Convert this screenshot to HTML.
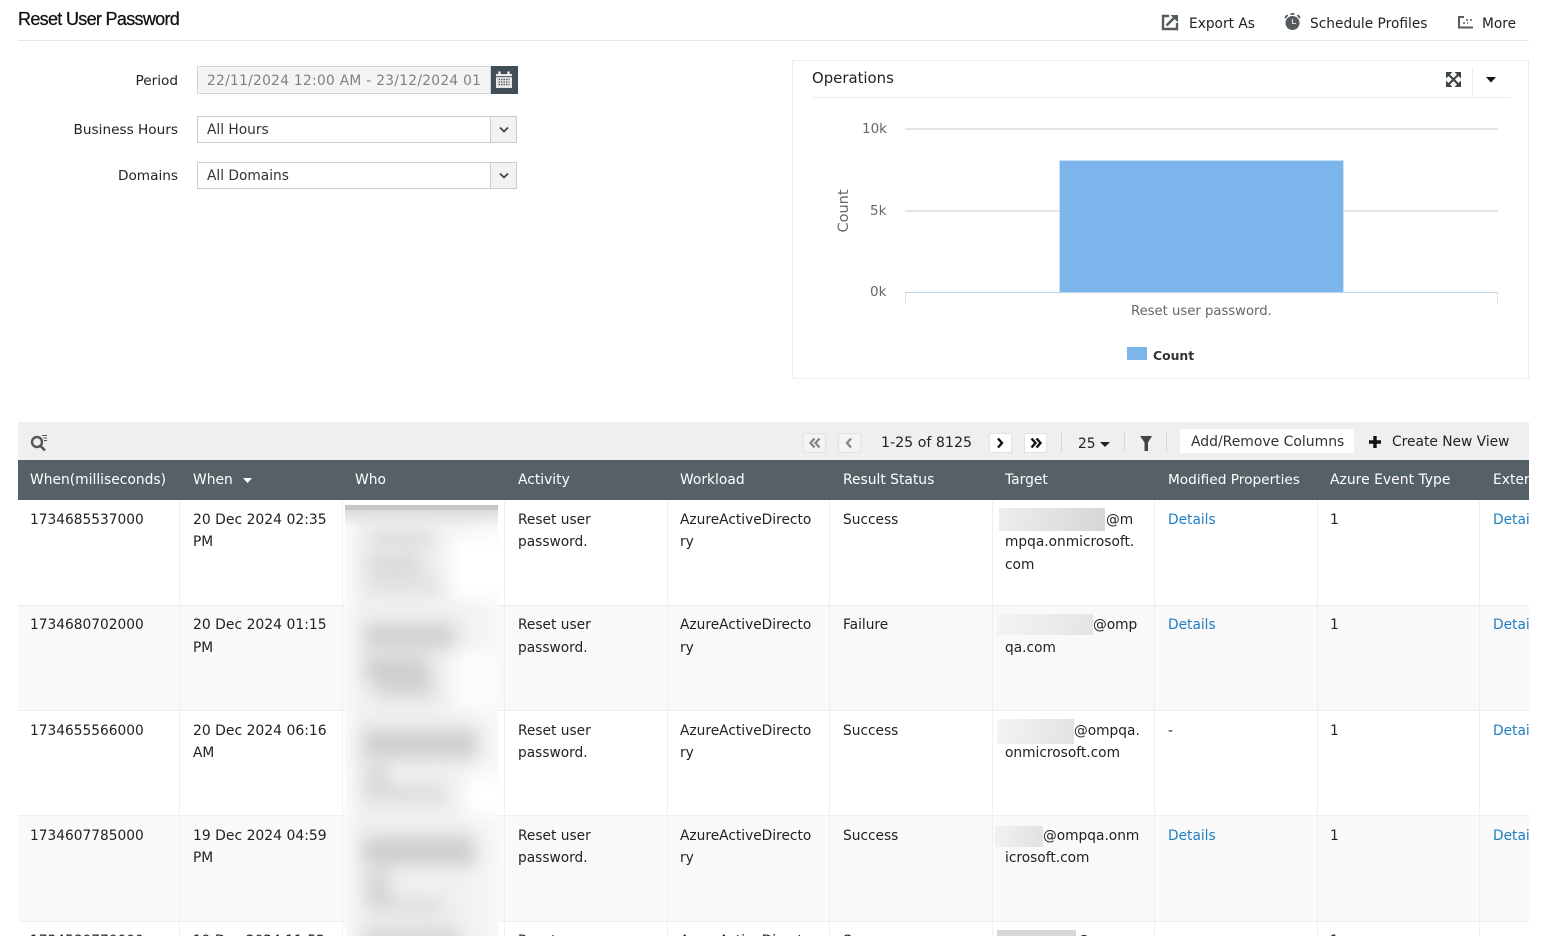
<!DOCTYPE html>
<html lang="en"><head><meta charset="utf-8"><title>Reset User Password</title>
<style>
html,body{margin:0;padding:0;background:#fff;width:1546px;height:936px;overflow:hidden}
body{position:relative;font-family:"DejaVu Sans","Liberation Sans",sans-serif;font-size:13.75px;color:#222}
.a{position:absolute}
.t{position:absolute;white-space:nowrap;line-height:20px;height:20px;margin-top:1px}
.l{text-align:right;width:170px;left:8px;font-size:13.65px}
.h{color:#fff;top:469px;font-size:13.85px}
.v{position:absolute;width:1px;top:500px;height:436px;background:#f0f0f0}
.r{position:absolute;left:18px;width:1511px;background:#f9f9f9}
.hr{position:absolute;left:18px;width:1511px;height:1px;background:#efefef}
.lk{color:#1f7fc1}
.box{position:absolute;background:#fff;border:1px solid #ccc;box-sizing:border-box}
.blob{position:absolute;background:#d0d0d0}
.rd{position:absolute;background:linear-gradient(100deg,#ececec,#dcdcdc)}
svg{position:absolute;overflow:visible}
.pg{position:absolute;top:433px;width:23px;height:20px;box-sizing:border-box;border:1px solid #e2e2e2;background:#fff}
</style></head><body>

<div class="t" style="left:18px;top:9px;margin-top:0;font-family:'Liberation Sans',sans-serif;font-size:18px;color:#111;letter-spacing:-.68px;-webkit-text-stroke:.25px #111">Reset User Password</div>
<div class="a" style="left:18px;top:40px;width:1511px;height:1px;background:#e6e6e6"></div>

<svg style="left:1162px;top:14px" width="16" height="16" viewBox="0 0 16 16"><path d="M7 2H1v13h14V9" fill="none" stroke="#555c60" stroke-width="2.400"/><path d="M4.500 11.500 12 4" fill="none" stroke="#555c60" stroke-width="2.600"/><path d="M8.500 1H16v7.500z" fill="#555c60"/></svg>
<div class="t" style="left:1189px;top:13px">Export As</div>
<svg style="left:1284px;top:13px" width="17" height="18" viewBox="0 0 17 18"><circle cx="8.500" cy="10" r="7" fill="#555c60"/><path d="M8.500 6v4.500H12" fill="none" stroke="#ddd" stroke-width="1.100"/><path d="M6.500 1h4M1 5l2.500-3M16 5l-2.500-3" stroke="#555c60" stroke-width="1.800" fill="none"/></svg>
<div class="t" style="left:1310px;top:13px">Schedule Profiles</div>
<svg style="left:1458px;top:15px" width="16" height="14" viewBox="0 0 16 14"><path d="M1 1v11.500h14" fill="none" stroke="#555c60" stroke-width="2"/><path d="M1 2h5" stroke="#555c60" stroke-width="2"/><path d="M8 5h2M12 5h2M5 8h2M9 8h1" stroke="#555c60" stroke-width="1.500"/></svg>
<div class="t" style="left:1482px;top:13px">More</div>

<div class="t l" style="top:70px">Period</div>
<div class="t l" style="top:119px">Business Hours</div>
<div class="t l" style="top:165px">Domains</div>

<div class="box" style="left:197px;top:66px;width:294px;height:28px;background:#f4f4f4;border-color:#d4d4d4"></div>
<div class="t" style="left:207px;top:70px;color:#808080;letter-spacing:.3px">22/11/2024 12:00 AM - 23/12/2024 01</div>
<div class="a" style="left:491px;top:66px;width:27px;height:28px;background:#434f56"></div>
<svg style="left:495px;top:71px" width="18" height="18" viewBox="0 0 18 18"><path d="M1 3h16v14H1z" fill="#e8e8e8"/><path d="M4.500 0.500v4M13.500 0.500v4" stroke="#fff" stroke-width="2.200"/><path d="M1 5.700h16" stroke="#434f56" stroke-width="1"/><path d="M3.500 8.500h11M3.500 11h11M3.500 13.500h11" stroke="#434f56" stroke-width="1.300" stroke-dasharray="1.500 1"/></svg>

<div class="box" style="left:197px;top:116px;width:320px;height:27px"></div>
<div class="a" style="left:490px;top:117px;width:25px;height:25px;background:#f2f2f2;border-left:1px solid #ccc"></div>
<svg style="left:499px;top:126px" width="10" height="8" viewBox="0 0 10 8"><path d="M1 1.500 5 5.500 9 1.500" fill="none" stroke="#444" stroke-width="1.800"/></svg>
<div class="t" style="left:207px;top:119px;color:#333">All Hours</div>
<div class="box" style="left:197px;top:162px;width:320px;height:27px"></div>
<div class="a" style="left:490px;top:163px;width:25px;height:25px;background:#f2f2f2;border-left:1px solid #ccc"></div>
<svg style="left:499px;top:172px" width="10" height="8" viewBox="0 0 10 8"><path d="M1 1.500 5 5.500 9 1.500" fill="none" stroke="#444" stroke-width="1.800"/></svg>
<div class="t" style="left:207px;top:165px;color:#333">All Domains</div>

<!-- Operations panel -->
<div class="box" style="left:792px;top:60px;width:737px;height:319px;border-color:#eee"></div>
<div class="t" style="left:812px;top:67px;font-size:14.9px">Operations</div>
<div class="a" style="left:812px;top:97px;width:699px;height:1px;background:#ececec"></div>
<div class="a" style="left:1472px;top:67px;width:1px;height:28px;background:#ececec"></div>
<svg style="left:1446px;top:72px" width="15" height="15" viewBox="0 0 15 15"><path d="M3 3 12 12M12 3 3 12" stroke="#3d4448" stroke-width="2.200"/><path d="M0 0h6.500L0 6.500zM15 0H8.500L15 6.500zM0 15h6.500L0 8.500zM15 15H8.500l6.500-6.500z" fill="#3d4448"/></svg>
<svg style="left:1486px;top:77px" width="10" height="6" viewBox="0 0 10 6"><path d="M0 0h10L5 5.500z" fill="#111"/></svg>

<div class="a" style="left:905px;top:128px;width:593px;height:2px;background:#e2e4e5"></div>
<div class="a" style="left:905px;top:210px;width:593px;height:2px;background:#e2e4e5"></div>
<div class="a" style="left:1059px;top:160px;width:285px;height:133px;background:#7cb4ec;border:1px solid #cde0f5;border-bottom:0;box-sizing:border-box"></div>
<div class="a" style="left:905px;top:292px;width:593px;height:1px;background:#c0d4e8"></div>
<div class="a" style="left:905px;top:293px;width:1px;height:11px;background:#d8dfe5"></div>
<div class="a" style="left:1497px;top:293px;width:1px;height:11px;background:#d8dfe5"></div>
<div class="t" style="left:862px;top:118px;color:#666;font-size:13.500px">10k</div>
<div class="t" style="left:870px;top:200px;color:#666;font-size:13.500px">5k</div>
<div class="t" style="left:870px;top:281px;color:#666;font-size:13.500px">0k</div>
<div class="t" style="left:844px;top:210px;color:#666;font-size:14.5px;transform:translate(-50%,-50%) rotate(-90deg)">Count</div>
<div class="t" style="left:1131px;top:301px;color:#666;font-size:13.2px">Reset user password.</div>
<div class="a" style="left:1127px;top:347px;width:20px;height:13px;background:#7cb4ec"></div>
<div class="t" style="left:1153px;top:345px;font-weight:bold;color:#333;font-size:12.4px">Count</div>

<!-- toolbar -->
<div class="a" style="left:18px;top:422px;width:1511px;height:38px;background:#efefef"></div>
<svg style="left:30px;top:434px" width="18" height="18" viewBox="0 0 18 18"><circle cx="7" cy="8" r="5" fill="none" stroke="#555" stroke-width="2.400"/><path d="M10.500 12 15 16.500" stroke="#555" stroke-width="2.600"/><path d="M12 1.500h5M13.500 4h3.500M14 6.500h3" stroke="#555" stroke-width="1"/></svg>
<div class="pg" style="left:803px;background:#f4f4f4"></div>
<div class="pg" style="left:838px;background:#f4f4f4"></div>
<div class="pg" style="left:989px;background:#fff"></div>
<div class="pg" style="left:1024px;background:#fff"></div>
<svg style="left:809px;top:437px" width="12" height="12" viewBox="0 0 12 12"><path d="M5.500 1.500 1.500 6l4 4.500M10.500 1.500 6.500 6l4 4.500" fill="none" stroke="#888" stroke-width="2.400"/></svg>
<svg style="left:845px;top:437px" width="8" height="12" viewBox="0 0 8 12"><path d="M6 1.500 2 6l4 4.500" fill="none" stroke="#888" stroke-width="2.400"/></svg>
<svg style="left:996px;top:437px" width="8" height="12" viewBox="0 0 8 12"><path d="M2 1.500 6 6l-4 4.500" fill="none" stroke="#111" stroke-width="2.400"/></svg>
<svg style="left:1030px;top:437px" width="12" height="12" viewBox="0 0 12 12"><path d="M1.500 1.500 5.500 6l-4 4.500M6.500 1.500 10.500 6l-4 4.500" fill="none" stroke="#111" stroke-width="2.400"/></svg>
<div class="t" style="left:881px;top:432px;font-size:14.2px">1-25 of 8125</div>
<div class="a" style="left:1061px;top:431px;width:1px;height:21px;background:#d8d8d8"></div>
<div class="t" style="left:1078px;top:433px">25</div>
<svg style="left:1100px;top:442px" width="10" height="6" viewBox="0 0 10 6"><path d="M0 0h10L5 5z" fill="#222"/></svg>
<div class="a" style="left:1124px;top:431px;width:1px;height:21px;background:#d8d8d8"></div>
<svg style="left:1140px;top:436px" width="12" height="15" viewBox="0 0 12 15"><path d="M0 0h12L8 6.500V15H4.500V6.500z" fill="#444"/></svg>
<div class="a" style="left:1166px;top:431px;width:1px;height:21px;background:#d8d8d8"></div>
<div class="a" style="left:1180px;top:429px;width:174px;height:24px;background:#fff"></div>
<div class="t" style="left:1191px;top:431px;color:#333;font-size:13.95px">Add/Remove Columns</div>
<svg style="left:1369px;top:436px" width="12" height="12" viewBox="0 0 12 12"><path d="M6 0v12M0 6h12" stroke="#111" stroke-width="3.400"/></svg>
<div class="t" style="left:1392px;top:431px;font-size:13.8px">Create New View</div>

<!-- row backgrounds -->
<div class="r" style="top:606px;height:104px"></div>
<div class="r" style="top:816px;height:105px"></div>
<div class="hr" style="top:605px"></div>
<div class="hr" style="top:710px"></div>
<div class="hr" style="top:815px"></div>
<div class="hr" style="top:921px"></div>
<div class="v" style="left:179px"></div><div class="v" style="left:342px"></div><div class="v" style="left:504px"></div><div class="v" style="left:667px"></div><div class="v" style="left:829px"></div><div class="v" style="left:992px"></div><div class="v" style="left:1154px"></div><div class="v" style="left:1317px"></div><div class="v" style="left:1479px"></div>

<!-- header -->
<div class="a" style="left:18px;top:460px;width:1511px;height:40px;background:#566167"></div>
<div class="t h" style="left:30px">When(milliseconds)</div>
<div class="t h" style="left:193px">When</div>
<svg style="left:243px;top:478px" width="9" height="5" viewBox="0 0 9 5"><path d="M0 0h9L4.500 5z" fill="#fff"/></svg>
<div class="t h" style="left:355px">Who</div>
<div class="t h" style="left:518px">Activity</div>
<div class="t h" style="left:680px">Workload</div>
<div class="t h" style="left:843px">Result Status</div>
<div class="t h" style="left:1005px">Target</div>
<div class="t h" style="left:1168px;font-size:13.7px">Modified Properties</div>
<div class="t h" style="left:1330px;font-size:13.95px">Azure Event Type</div>
<div class="a" style="left:1493px;top:460px;width:36px;height:40px;overflow:hidden"><div class="t" style="left:0;top:9px;color:#fff;font-size:13.85px">External</div></div>

<!-- Blurred Who column -->
<div class="a" style="left:345px;top:505px;width:153px;height:431px;overflow:hidden;background:linear-gradient(90deg,#f9f9f9,#f1f1f1 12%,#f1f1f1 75%,#f7f7f7)">
 <div class="a" style="left:0;top:0;width:153px;height:431px;filter:blur(9px)">
  <div class="blob" style="left:25px;top:26px;width:62px;height:15px;background:#d8d8d8"></div>
  <div class="blob" style="left:22px;top:52px;width:55px;height:16px;background:#d2d2d2"></div>
  <div class="blob" style="left:22px;top:75px;width:75px;height:12px;background:#dadada"></div>
  <div class="blob" style="left:105px;top:30px;width:60px;height:65px;background:#fff"></div>
  <div class="blob" style="left:20px;top:119px;width:90px;height:24px;background:#cecece"></div>
  <div class="blob" style="left:20px;top:152px;width:64px;height:24px;background:#cccccc"></div>
  <div class="blob" style="left:30px;top:172px;width:60px;height:20px;background:#d2d2d2"></div>
  <div class="blob" style="left:108px;top:145px;width:55px;height:60px;background:#fcfcfc"></div>
  <div class="blob" style="left:18px;top:225px;width:114px;height:28px;background:#cccccc"></div>
  <div class="blob" style="left:22px;top:262px;width:20px;height:18px;background:#cecece"></div>
  <div class="blob" style="left:20px;top:282px;width:80px;height:14px;background:#d6d6d6"></div>
  <div class="blob" style="left:120px;top:270px;width:43px;height:40px;background:#fff"></div>
  <div class="blob" style="left:18px;top:332px;width:112px;height:28px;background:#cccccc"></div>
  <div class="blob" style="left:22px;top:367px;width:22px;height:36px;background:#d0d0d0"></div>
  <div class="blob" style="left:25px;top:395px;width:74px;height:12px;background:#d6d6d6"></div>
  <div class="blob" style="left:20px;top:424px;width:94px;height:18px;background:#d0d0d0"></div>
 </div>
 <div class="a" style="left:0;top:0;width:153px;height:5px;background:#c4c6c8"></div>
 <div class="a" style="left:0;top:5px;width:153px;height:17px;background:linear-gradient(#dadcdd,rgba(240,240,240,0))"></div>
</div>

<!-- Row 1 -->
<div class="t" style="left:30px;top:509px">1734685537000</div>
<div class="t" style="left:193px;top:509px;font-size:13.95px">20 Dec 2024 02:35</div><div class="t" style="left:193px;top:531px">PM</div>
<div class="t" style="left:518px;top:509px">Reset user</div><div class="t" style="left:518px;top:531px">password.</div>
<div class="t" style="left:680px;top:509px">AzureActiveDirecto</div><div class="t" style="left:680px;top:531px">ry</div>
<div class="t" style="left:843px;top:509px">Success</div>
<div class="rd" style="left:999px;top:508px;width:106px;height:23px;background:linear-gradient(100deg,#eee,#d6d6d6)"></div>
<div class="t" style="left:1106px;top:509px">@m</div><div class="t" style="left:1005px;top:531px">mpqa.onmicrosoft.</div><div class="t" style="left:1005px;top:554px">com</div>
<div class="t lk" style="left:1168px;top:509px">Details</div>
<div class="t" style="left:1330px;top:509px">1</div>

<!-- Row 2 -->
<div class="t" style="left:30px;top:614px">1734680702000</div>
<div class="t" style="left:193px;top:614px;font-size:13.95px">20 Dec 2024 01:15</div><div class="t" style="left:193px;top:637px">PM</div>
<div class="t" style="left:518px;top:614px">Reset user</div><div class="t" style="left:518px;top:637px">password.</div>
<div class="t" style="left:680px;top:614px">AzureActiveDirecto</div><div class="t" style="left:680px;top:637px">ry</div>
<div class="t" style="left:843px;top:614px">Failure</div>
<div class="rd" style="left:997px;top:614px;width:96px;height:21px;background:linear-gradient(100deg,#f4f4f4,#e4e4e4)"></div>
<div class="t" style="left:1093px;top:614px">@omp</div><div class="t" style="left:1005px;top:637px">qa.com</div>
<div class="t lk" style="left:1168px;top:614px">Details</div>
<div class="t" style="left:1330px;top:614px">1</div>

<!-- Row 3 -->
<div class="t" style="left:30px;top:720px">1734655566000</div>
<div class="t" style="left:193px;top:720px;font-size:13.95px">20 Dec 2024 06:16</div><div class="t" style="left:193px;top:742px">AM</div>
<div class="t" style="left:518px;top:720px">Reset user</div><div class="t" style="left:518px;top:742px">password.</div>
<div class="t" style="left:680px;top:720px">AzureActiveDirecto</div><div class="t" style="left:680px;top:742px">ry</div>
<div class="t" style="left:843px;top:720px">Success</div>
<div class="rd" style="left:997px;top:719px;width:77px;height:25px;background:linear-gradient(100deg,#f4f4f4,#e2e2e2)"></div>
<div class="t" style="left:1074px;top:720px">@ompqa.</div><div class="t" style="left:1005px;top:742px">onmicrosoft.com</div>
<div class="t" style="left:1168px;top:720px">-</div>
<div class="t" style="left:1330px;top:720px">1</div>

<!-- Row 4 -->
<div class="t" style="left:30px;top:825px">1734607785000</div>
<div class="t" style="left:193px;top:825px;font-size:13.95px">19 Dec 2024 04:59</div><div class="t" style="left:193px;top:847px">PM</div>
<div class="t" style="left:518px;top:825px">Reset user</div><div class="t" style="left:518px;top:847px">password.</div>
<div class="t" style="left:680px;top:825px">AzureActiveDirecto</div><div class="t" style="left:680px;top:847px">ry</div>
<div class="t" style="left:843px;top:825px">Success</div>
<div class="rd" style="left:995px;top:826px;width:48px;height:21px;background:linear-gradient(100deg,#f2f2f2,#e0e0e0)"></div>
<div class="t" style="left:1043px;top:825px">@ompqa.onm</div><div class="t" style="left:1005px;top:847px">icrosoft.com</div>
<div class="t lk" style="left:1168px;top:825px">Details</div>
<div class="t" style="left:1330px;top:825px">1</div>

<!-- Row 5 -->
<div class="t" style="left:30px;top:930px">1734580770000</div>
<div class="t" style="left:193px;top:930px">19 Dec 2024 11:52</div>
<div class="t" style="left:518px;top:930px">Reset user</div>
<div class="t" style="left:680px;top:930px">AzureActiveDirecto</div>
<div class="t" style="left:843px;top:930px">Success</div>
<div class="rd" style="left:997px;top:930px;width:79px;height:6px;background:#d8d8d8"></div>
<div class="t" style="left:1077px;top:930px">@</div>
<div class="t" style="left:1330px;top:930px">1</div>

<!-- Clipped last column -->
<div class="a" style="left:1493px;top:500px;width:36px;height:436px;overflow:hidden">
 <div class="t lk" style="left:0;top:9px">Details</div>
 <div class="t lk" style="left:0;top:114px">Details</div>
 <div class="t lk" style="left:0;top:220px">Details</div>
 <div class="t lk" style="left:0;top:325px">Details</div>
</div>
</body></html>
